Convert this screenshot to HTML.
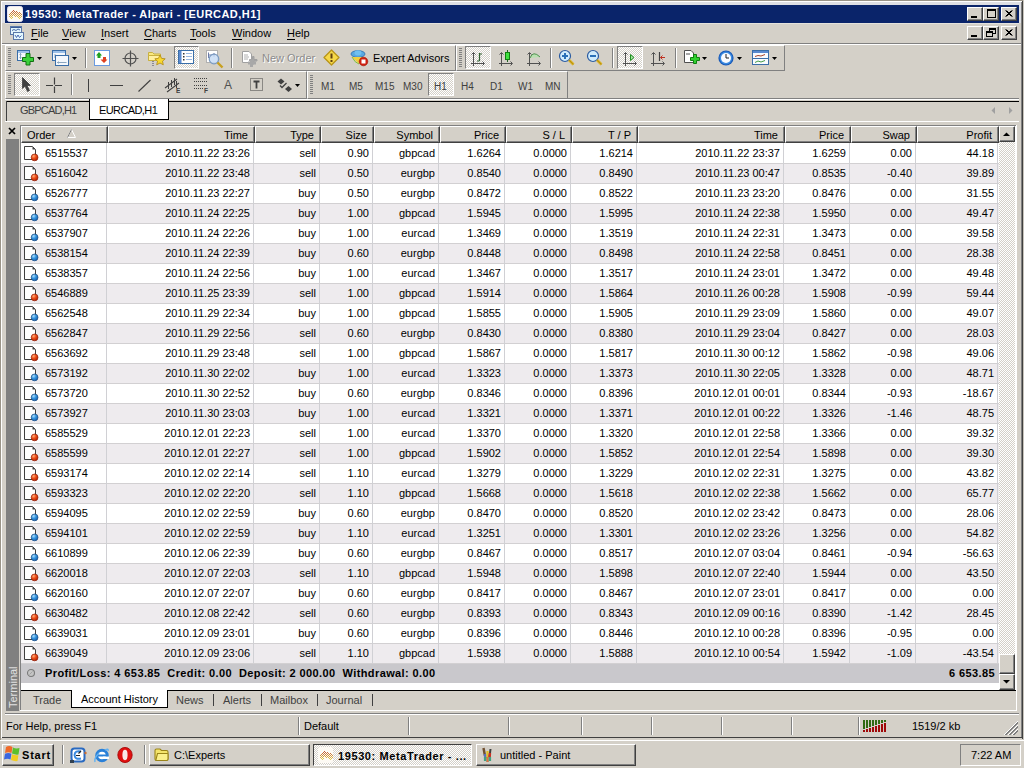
<!DOCTYPE html>
<html><head><meta charset="utf-8"><title>MetaTrader</title><style>
*{box-sizing:border-box}
html,body{margin:0;padding:0}
body{width:1024px;height:768px;overflow:hidden;position:relative;background:#D4D0C8;font-family:"Liberation Sans",sans-serif;font-size:11px;color:#000}
.a{position:absolute}
.t{position:absolute;white-space:pre;line-height:13px}
.btn{position:absolute;background:#D4D0C8;border-top:1px solid #fff;border-left:1px solid #fff;border-right:1px solid #404040;border-bottom:1px solid #404040;box-shadow:inset -1px -1px 0 #808080}
.sunk{position:absolute;border-top:1px solid #808080;border-left:1px solid #808080;border-right:1px solid #fff;border-bottom:1px solid #fff}
.pressed{position:absolute;border-top:1px solid #808080;border-left:1px solid #808080;border-right:1px solid #fff;border-bottom:1px solid #fff;background:repeating-conic-gradient(#fff 0 25%,#D4D0C8 0 50%) 0 0/2px 2px}
.dith{background:repeating-conic-gradient(#fff 0 25%,#D4D0C8 0 50%) 0 0/2px 2px}
.hl{position:absolute;height:1px}
.vl{position:absolute;width:1px}
.row{position:absolute;left:21px;width:978px;height:20px}
.c{position:absolute;top:0;height:19px;line-height:19px;text-align:right;white-space:pre}
.hd{position:absolute;top:0;height:17px;line-height:16px;white-space:pre;text-align:right}
</style></head><body>
<svg width="0" height="0" style="position:absolute"><defs><radialGradient id="gs" cx="0.35" cy="0.3" r="0.75"><stop offset="0" stop-color="#ffb080"/><stop offset="0.45" stop-color="#f05018"/><stop offset="1" stop-color="#b02008"/></radialGradient><radialGradient id="gb" cx="0.35" cy="0.3" r="0.75"><stop offset="0" stop-color="#b0e0ff"/><stop offset="0.45" stop-color="#3898e0"/><stop offset="1" stop-color="#1860b0"/></radialGradient></defs></svg><div class="a" style="left:0;top:0;width:1024px;height:1px;background:#9a9488"></div><div class="a" style="left:0;top:0;width:1px;height:740px;background:#9a9488"></div><div class="a" style="left:1px;top:1px;width:1021px;height:1px;background:#fff"></div><div class="a" style="left:1px;top:1px;width:1px;height:737px;background:#fff"></div><div class="a" style="left:1022px;top:1px;width:1px;height:738px;background:#404040"></div><div class="a" style="left:1021px;top:2px;width:1px;height:736px;background:#808080"></div><div class="a" style="left:1023px;top:0;width:1px;height:740px;background:#c8c4bc"></div><div class="a" style="left:2px;top:2px;width:1019px;height:3px;background:#DEDFE4"></div><div class="a" style="left:2px;top:2px;width:3px;height:21px;background:#DEDFE4"></div><div class="a" style="left:1019px;top:2px;width:2px;height:21px;background:#DEDFE4"></div><div class="a" style="left:5px;top:5px;width:1014px;height:18px;background:#0A246A"></div><div class="t" style="left:25px;top:8px;font-weight:bold;color:#fff;letter-spacing:0.45px">19530: MetaTrader - Alpari - [EURCAD,H1]</div><div class="btn" style="left:967px;top:7px;width:16px;height:14px"></div><div class="btn" style="left:983px;top:7px;width:16px;height:14px"></div><div class="btn" style="left:1001px;top:7px;width:16px;height:14px"></div><div class="a" style="left:971px;top:16px;width:6px;height:2px;background:#000"></div><div class="a" style="left:987px;top:9px;width:9px;height:9px;border:1px solid #000;border-top-width:2px"></div><svg class="a" style="left:1001px;top:7px" width="16" height="14"><path d="M4.5 3.5 L10.5 9.5 M5.5 3.5 L11.5 9.5 M10.5 3.5 L4.5 9.5 M11.5 3.5 L5.5 9.5" stroke="#000" stroke-width="1"/></svg><div class="t" style="left:31px;top:27px"><u style="text-decoration:none;border-bottom:1px solid #000">F</u>ile</div><div class="t" style="left:62px;top:27px"><u style="text-decoration:none;border-bottom:1px solid #000">V</u>iew</div><div class="t" style="left:101px;top:27px"><u style="text-decoration:none;border-bottom:1px solid #000">I</u>nsert</div><div class="t" style="left:144px;top:27px"><u style="text-decoration:none;border-bottom:1px solid #000">C</u>harts</div><div class="t" style="left:190px;top:27px"><u style="text-decoration:none;border-bottom:1px solid #000">T</u>ools</div><div class="t" style="left:232px;top:27px"><u style="text-decoration:none;border-bottom:1px solid #000">W</u>indow</div><div class="t" style="left:287px;top:27px"><u style="text-decoration:none;border-bottom:1px solid #000">H</u>elp</div><div class="btn" style="left:967px;top:26px;width:16px;height:14px"></div><div class="btn" style="left:983px;top:26px;width:16px;height:14px"></div><div class="btn" style="left:1001px;top:26px;width:16px;height:14px"></div><div class="a" style="left:971px;top:35px;width:6px;height:2px;background:#000"></div><div class="a" style="left:989px;top:28px;width:7px;height:6px;border:1px solid #000;border-top-width:2px"></div><div class="a" style="left:986px;top:31px;width:7px;height:6px;border:1px solid #000;border-top-width:2px;background:#D4D0C8"></div><svg class="a" style="left:1001px;top:26px" width="16" height="14"><path d="M4.5 3.5 L10.5 9.5 M5.5 3.5 L11.5 9.5 M10.5 3.5 L4.5 9.5 M11.5 3.5 L5.5 9.5" stroke="#000" stroke-width="1"/></svg><div class="hl" style="left:5px;top:23px;width:1014px;background:#E4E2DC"></div><div class="hl" style="left:2px;top:43px;width:1019px;background:#808080"></div><div class="hl" style="left:2px;top:44px;width:1019px;background:#fff"></div><div class="a" style="left:5px;top:45px;width:451px;height:26px;border-left:1px solid #fff;border-top:1px solid #fff;border-right:1px solid #808080;border-bottom:1px solid #808080"></div><div class="a" style="left:456px;top:45px;width:329px;height:26px;border-left:1px solid #fff;border-top:1px solid #fff;border-right:1px solid #808080;border-bottom:1px solid #808080"></div><div class="a" style="left:5px;top:71px;width:302px;height:28px;border-left:1px solid #fff;border-top:1px solid #fff;border-right:1px solid #808080;border-bottom:1px solid #808080"></div><div class="a" style="left:307px;top:71px;width:261px;height:28px;border-left:1px solid #fff;border-top:1px solid #fff;border-right:1px solid #808080;border-bottom:1px solid #808080"></div><div class="a" style="left:8px;top:48px;width:3px;height:19px;background:repeating-linear-gradient(#808080 0 1px,transparent 1px 2px)"></div><div class="a" style="left:459px;top:48px;width:3px;height:19px;background:repeating-linear-gradient(#808080 0 1px,transparent 1px 2px)"></div><div class="a" style="left:8px;top:75px;width:3px;height:19px;background:repeating-linear-gradient(#808080 0 1px,transparent 1px 2px)"></div><div class="a" style="left:310px;top:75px;width:3px;height:19px;background:repeating-linear-gradient(#808080 0 1px,transparent 1px 2px)"></div><div class="hl" style="left:568px;top:98px;width:451px;background:#808080"></div><div class="hl" style="left:5px;top:99px;width:1014px;height:1px;background:#fff"></div><div class="hl" style="left:6px;top:101px;width:1013px;background:#000"></div><div class="a" style="left:6px;top:101px;width:1px;height:20px;background:#404040"></div><div class="t" style="left:20px;top:104px;color:#404040;letter-spacing:-0.8px">GBPCAD,H1</div><div class="a" style="left:89px;top:99px;width:80px;height:21px;background:#fff;border-left:1px solid #000;border-right:1px solid #000;border-bottom:1px solid #000"></div><div class="t" style="left:99px;top:104px;letter-spacing:-0.6px">EURCAD,H1</div><div class="hl" style="left:5px;top:121px;width:1014px;background:#fff"></div><svg class="a" style="left:8px;top:127px" width="8" height="8"><path d="M1 1L7 7M7 1L1 7" stroke="#000" stroke-width="1.7"/></svg><div class="a" style="left:6px;top:139px;width:13px;height:572px;background:#808080"></div><div class="t" style="left:7px;top:708px;transform:rotate(-90deg);transform-origin:0 0;color:#E2E2E2;font-size:11px">Terminal</div><div class="a" style="left:20px;top:125px;width:996px;height:566px;background:#fff;border-left:1px solid #808080;border-top:1px solid #808080"></div><div class="a" style="left:21px;top:126px;width:87px;height:17px;background:#D4D0C8;border-top:1px solid #fff;border-left:1px solid #fff;border-right:1px solid #404040;border-bottom:1px solid #404040;box-shadow:inset -1px -1px 0 #808080"></div><div class="t" style="left:27px;top:129px">Order</div><svg class="a" style="left:67px;top:129px" width="10" height="9"><path d="M4.5 0.5 L0.5 8.5 L8.5 8.5 Z" fill="none" stroke="#fff"/><path d="M4.5 0.5 L0.5 8.5" stroke="#808080"/></svg><div class="a" style="left:108px;top:126px;width:147px;height:17px;background:#D4D0C8;border-top:1px solid #fff;border-left:1px solid #fff;border-right:1px solid #404040;border-bottom:1px solid #404040;box-shadow:inset -1px -1px 0 #808080"></div><div class="t" style="left:108px;top:129px;width:140px;text-align:right">Time</div><div class="a" style="left:255px;top:126px;width:66px;height:17px;background:#D4D0C8;border-top:1px solid #fff;border-left:1px solid #fff;border-right:1px solid #404040;border-bottom:1px solid #404040;box-shadow:inset -1px -1px 0 #808080"></div><div class="t" style="left:255px;top:129px;width:59px;text-align:right">Type</div><div class="a" style="left:321px;top:126px;width:53px;height:17px;background:#D4D0C8;border-top:1px solid #fff;border-left:1px solid #fff;border-right:1px solid #404040;border-bottom:1px solid #404040;box-shadow:inset -1px -1px 0 #808080"></div><div class="t" style="left:321px;top:129px;width:46px;text-align:right">Size</div><div class="a" style="left:374px;top:126px;width:66px;height:17px;background:#D4D0C8;border-top:1px solid #fff;border-left:1px solid #fff;border-right:1px solid #404040;border-bottom:1px solid #404040;box-shadow:inset -1px -1px 0 #808080"></div><div class="t" style="left:374px;top:129px;width:59px;text-align:right">Symbol</div><div class="a" style="left:440px;top:126px;width:66px;height:17px;background:#D4D0C8;border-top:1px solid #fff;border-left:1px solid #fff;border-right:1px solid #404040;border-bottom:1px solid #404040;box-shadow:inset -1px -1px 0 #808080"></div><div class="t" style="left:440px;top:129px;width:59px;text-align:right">Price</div><div class="a" style="left:506px;top:126px;width:66px;height:17px;background:#D4D0C8;border-top:1px solid #fff;border-left:1px solid #fff;border-right:1px solid #404040;border-bottom:1px solid #404040;box-shadow:inset -1px -1px 0 #808080"></div><div class="t" style="left:506px;top:129px;width:59px;text-align:right">S / L</div><div class="a" style="left:572px;top:126px;width:66px;height:17px;background:#D4D0C8;border-top:1px solid #fff;border-left:1px solid #fff;border-right:1px solid #404040;border-bottom:1px solid #404040;box-shadow:inset -1px -1px 0 #808080"></div><div class="t" style="left:572px;top:129px;width:59px;text-align:right">T / P</div><div class="a" style="left:638px;top:126px;width:147px;height:17px;background:#D4D0C8;border-top:1px solid #fff;border-left:1px solid #fff;border-right:1px solid #404040;border-bottom:1px solid #404040;box-shadow:inset -1px -1px 0 #808080"></div><div class="t" style="left:638px;top:129px;width:140px;text-align:right">Time</div><div class="a" style="left:785px;top:126px;width:66px;height:17px;background:#D4D0C8;border-top:1px solid #fff;border-left:1px solid #fff;border-right:1px solid #404040;border-bottom:1px solid #404040;box-shadow:inset -1px -1px 0 #808080"></div><div class="t" style="left:785px;top:129px;width:59px;text-align:right">Price</div><div class="a" style="left:851px;top:126px;width:66px;height:17px;background:#D4D0C8;border-top:1px solid #fff;border-left:1px solid #fff;border-right:1px solid #404040;border-bottom:1px solid #404040;box-shadow:inset -1px -1px 0 #808080"></div><div class="t" style="left:851px;top:129px;width:59px;text-align:right">Swap</div><div class="a" style="left:917px;top:126px;width:82px;height:17px;background:#D4D0C8;border-top:1px solid #fff;border-left:1px solid #fff;border-right:1px solid #404040;border-bottom:1px solid #404040;box-shadow:inset -1px -1px 0 #808080"></div><div class="t" style="left:917px;top:129px;width:75px;text-align:right">Profit</div><div class="a" style="left:21px;top:144px;width:978px;height:19px;background:#fff"></div><div class="hl" style="left:21px;top:163px;width:978px;background:#D2D0D2"></div><svg class="a" style="left:23px;top:145px" width="16" height="17"><path d="M1.5 1.5H9.5L12.5 4.5V14.5H1.5Z" fill="#fff" stroke="#404040"/><path d="M9.5 1.5V4.5H12.5Z" fill="#404040"/><circle cx="11.6" cy="12.4" r="3.4" fill="url(#gs)" stroke="#902008" stroke-width="0.7"/></svg><div class="t" style="left:45px;top:147px">6515537</div><div class="t" style="left:107px;top:147px;width:143px;text-align:right">2010.11.22 23:26</div><div class="t" style="left:254px;top:147px;width:62px;text-align:right">sell</div><div class="t" style="left:320px;top:147px;width:49px;text-align:right">0.90</div><div class="t" style="left:373px;top:147px;width:62px;text-align:right">gbpcad</div><div class="t" style="left:439px;top:147px;width:62px;text-align:right">1.6264</div><div class="t" style="left:505px;top:147px;width:62px;text-align:right">0.0000</div><div class="t" style="left:571px;top:147px;width:62px;text-align:right">1.6214</div><div class="t" style="left:637px;top:147px;width:143px;text-align:right">2010.11.22 23:37</div><div class="t" style="left:784px;top:147px;width:62px;text-align:right">1.6259</div><div class="t" style="left:850px;top:147px;width:62px;text-align:right">0.00</div><div class="t" style="left:916px;top:147px;width:78px;text-align:right">44.18</div><div class="a" style="left:21px;top:164px;width:978px;height:19px;background:#EEEBEE"></div><div class="hl" style="left:21px;top:183px;width:978px;background:#D2D0D2"></div><svg class="a" style="left:23px;top:165px" width="16" height="17"><path d="M1.5 1.5H9.5L12.5 4.5V14.5H1.5Z" fill="#fff" stroke="#404040"/><path d="M9.5 1.5V4.5H12.5Z" fill="#404040"/><circle cx="11.6" cy="12.4" r="3.4" fill="url(#gs)" stroke="#902008" stroke-width="0.7"/></svg><div class="t" style="left:45px;top:167px">6516042</div><div class="t" style="left:107px;top:167px;width:143px;text-align:right">2010.11.22 23:48</div><div class="t" style="left:254px;top:167px;width:62px;text-align:right">sell</div><div class="t" style="left:320px;top:167px;width:49px;text-align:right">0.50</div><div class="t" style="left:373px;top:167px;width:62px;text-align:right">eurgbp</div><div class="t" style="left:439px;top:167px;width:62px;text-align:right">0.8540</div><div class="t" style="left:505px;top:167px;width:62px;text-align:right">0.0000</div><div class="t" style="left:571px;top:167px;width:62px;text-align:right">0.8490</div><div class="t" style="left:637px;top:167px;width:143px;text-align:right">2010.11.23 00:47</div><div class="t" style="left:784px;top:167px;width:62px;text-align:right">0.8535</div><div class="t" style="left:850px;top:167px;width:62px;text-align:right">-0.40</div><div class="t" style="left:916px;top:167px;width:78px;text-align:right">39.89</div><div class="a" style="left:21px;top:184px;width:978px;height:19px;background:#fff"></div><div class="hl" style="left:21px;top:203px;width:978px;background:#D2D0D2"></div><svg class="a" style="left:23px;top:185px" width="16" height="17"><path d="M1.5 1.5H9.5L12.5 4.5V14.5H1.5Z" fill="#fff" stroke="#404040"/><path d="M9.5 1.5V4.5H12.5Z" fill="#404040"/><circle cx="11.6" cy="12.4" r="3.4" fill="url(#gb)" stroke="#1a4a80" stroke-width="0.7"/></svg><div class="t" style="left:45px;top:187px">6526777</div><div class="t" style="left:107px;top:187px;width:143px;text-align:right">2010.11.23 22:27</div><div class="t" style="left:254px;top:187px;width:62px;text-align:right">buy</div><div class="t" style="left:320px;top:187px;width:49px;text-align:right">0.50</div><div class="t" style="left:373px;top:187px;width:62px;text-align:right">eurgbp</div><div class="t" style="left:439px;top:187px;width:62px;text-align:right">0.8472</div><div class="t" style="left:505px;top:187px;width:62px;text-align:right">0.0000</div><div class="t" style="left:571px;top:187px;width:62px;text-align:right">0.8522</div><div class="t" style="left:637px;top:187px;width:143px;text-align:right">2010.11.23 23:20</div><div class="t" style="left:784px;top:187px;width:62px;text-align:right">0.8476</div><div class="t" style="left:850px;top:187px;width:62px;text-align:right">0.00</div><div class="t" style="left:916px;top:187px;width:78px;text-align:right">31.55</div><div class="a" style="left:21px;top:204px;width:978px;height:19px;background:#EEEBEE"></div><div class="hl" style="left:21px;top:223px;width:978px;background:#D2D0D2"></div><svg class="a" style="left:23px;top:205px" width="16" height="17"><path d="M1.5 1.5H9.5L12.5 4.5V14.5H1.5Z" fill="#fff" stroke="#404040"/><path d="M9.5 1.5V4.5H12.5Z" fill="#404040"/><circle cx="11.6" cy="12.4" r="3.4" fill="url(#gb)" stroke="#1a4a80" stroke-width="0.7"/></svg><div class="t" style="left:45px;top:207px">6537764</div><div class="t" style="left:107px;top:207px;width:143px;text-align:right">2010.11.24 22:25</div><div class="t" style="left:254px;top:207px;width:62px;text-align:right">buy</div><div class="t" style="left:320px;top:207px;width:49px;text-align:right">1.00</div><div class="t" style="left:373px;top:207px;width:62px;text-align:right">gbpcad</div><div class="t" style="left:439px;top:207px;width:62px;text-align:right">1.5945</div><div class="t" style="left:505px;top:207px;width:62px;text-align:right">0.0000</div><div class="t" style="left:571px;top:207px;width:62px;text-align:right">1.5995</div><div class="t" style="left:637px;top:207px;width:143px;text-align:right">2010.11.24 22:38</div><div class="t" style="left:784px;top:207px;width:62px;text-align:right">1.5950</div><div class="t" style="left:850px;top:207px;width:62px;text-align:right">0.00</div><div class="t" style="left:916px;top:207px;width:78px;text-align:right">49.47</div><div class="a" style="left:21px;top:224px;width:978px;height:19px;background:#fff"></div><div class="hl" style="left:21px;top:243px;width:978px;background:#D2D0D2"></div><svg class="a" style="left:23px;top:225px" width="16" height="17"><path d="M1.5 1.5H9.5L12.5 4.5V14.5H1.5Z" fill="#fff" stroke="#404040"/><path d="M9.5 1.5V4.5H12.5Z" fill="#404040"/><circle cx="11.6" cy="12.4" r="3.4" fill="url(#gb)" stroke="#1a4a80" stroke-width="0.7"/></svg><div class="t" style="left:45px;top:227px">6537907</div><div class="t" style="left:107px;top:227px;width:143px;text-align:right">2010.11.24 22:26</div><div class="t" style="left:254px;top:227px;width:62px;text-align:right">buy</div><div class="t" style="left:320px;top:227px;width:49px;text-align:right">1.00</div><div class="t" style="left:373px;top:227px;width:62px;text-align:right">eurcad</div><div class="t" style="left:439px;top:227px;width:62px;text-align:right">1.3469</div><div class="t" style="left:505px;top:227px;width:62px;text-align:right">0.0000</div><div class="t" style="left:571px;top:227px;width:62px;text-align:right">1.3519</div><div class="t" style="left:637px;top:227px;width:143px;text-align:right">2010.11.24 22:31</div><div class="t" style="left:784px;top:227px;width:62px;text-align:right">1.3473</div><div class="t" style="left:850px;top:227px;width:62px;text-align:right">0.00</div><div class="t" style="left:916px;top:227px;width:78px;text-align:right">39.58</div><div class="a" style="left:21px;top:244px;width:978px;height:19px;background:#EEEBEE"></div><div class="hl" style="left:21px;top:263px;width:978px;background:#D2D0D2"></div><svg class="a" style="left:23px;top:245px" width="16" height="17"><path d="M1.5 1.5H9.5L12.5 4.5V14.5H1.5Z" fill="#fff" stroke="#404040"/><path d="M9.5 1.5V4.5H12.5Z" fill="#404040"/><circle cx="11.6" cy="12.4" r="3.4" fill="url(#gb)" stroke="#1a4a80" stroke-width="0.7"/></svg><div class="t" style="left:45px;top:247px">6538154</div><div class="t" style="left:107px;top:247px;width:143px;text-align:right">2010.11.24 22:39</div><div class="t" style="left:254px;top:247px;width:62px;text-align:right">buy</div><div class="t" style="left:320px;top:247px;width:49px;text-align:right">0.60</div><div class="t" style="left:373px;top:247px;width:62px;text-align:right">eurgbp</div><div class="t" style="left:439px;top:247px;width:62px;text-align:right">0.8448</div><div class="t" style="left:505px;top:247px;width:62px;text-align:right">0.0000</div><div class="t" style="left:571px;top:247px;width:62px;text-align:right">0.8498</div><div class="t" style="left:637px;top:247px;width:143px;text-align:right">2010.11.24 22:58</div><div class="t" style="left:784px;top:247px;width:62px;text-align:right">0.8451</div><div class="t" style="left:850px;top:247px;width:62px;text-align:right">0.00</div><div class="t" style="left:916px;top:247px;width:78px;text-align:right">28.38</div><div class="a" style="left:21px;top:264px;width:978px;height:19px;background:#fff"></div><div class="hl" style="left:21px;top:283px;width:978px;background:#D2D0D2"></div><svg class="a" style="left:23px;top:265px" width="16" height="17"><path d="M1.5 1.5H9.5L12.5 4.5V14.5H1.5Z" fill="#fff" stroke="#404040"/><path d="M9.5 1.5V4.5H12.5Z" fill="#404040"/><circle cx="11.6" cy="12.4" r="3.4" fill="url(#gb)" stroke="#1a4a80" stroke-width="0.7"/></svg><div class="t" style="left:45px;top:267px">6538357</div><div class="t" style="left:107px;top:267px;width:143px;text-align:right">2010.11.24 22:56</div><div class="t" style="left:254px;top:267px;width:62px;text-align:right">buy</div><div class="t" style="left:320px;top:267px;width:49px;text-align:right">1.00</div><div class="t" style="left:373px;top:267px;width:62px;text-align:right">eurcad</div><div class="t" style="left:439px;top:267px;width:62px;text-align:right">1.3467</div><div class="t" style="left:505px;top:267px;width:62px;text-align:right">0.0000</div><div class="t" style="left:571px;top:267px;width:62px;text-align:right">1.3517</div><div class="t" style="left:637px;top:267px;width:143px;text-align:right">2010.11.24 23:01</div><div class="t" style="left:784px;top:267px;width:62px;text-align:right">1.3472</div><div class="t" style="left:850px;top:267px;width:62px;text-align:right">0.00</div><div class="t" style="left:916px;top:267px;width:78px;text-align:right">49.48</div><div class="a" style="left:21px;top:284px;width:978px;height:19px;background:#EEEBEE"></div><div class="hl" style="left:21px;top:303px;width:978px;background:#D2D0D2"></div><svg class="a" style="left:23px;top:285px" width="16" height="17"><path d="M1.5 1.5H9.5L12.5 4.5V14.5H1.5Z" fill="#fff" stroke="#404040"/><path d="M9.5 1.5V4.5H12.5Z" fill="#404040"/><circle cx="11.6" cy="12.4" r="3.4" fill="url(#gs)" stroke="#902008" stroke-width="0.7"/></svg><div class="t" style="left:45px;top:287px">6546889</div><div class="t" style="left:107px;top:287px;width:143px;text-align:right">2010.11.25 23:39</div><div class="t" style="left:254px;top:287px;width:62px;text-align:right">sell</div><div class="t" style="left:320px;top:287px;width:49px;text-align:right">1.00</div><div class="t" style="left:373px;top:287px;width:62px;text-align:right">gbpcad</div><div class="t" style="left:439px;top:287px;width:62px;text-align:right">1.5914</div><div class="t" style="left:505px;top:287px;width:62px;text-align:right">0.0000</div><div class="t" style="left:571px;top:287px;width:62px;text-align:right">1.5864</div><div class="t" style="left:637px;top:287px;width:143px;text-align:right">2010.11.26 00:28</div><div class="t" style="left:784px;top:287px;width:62px;text-align:right">1.5908</div><div class="t" style="left:850px;top:287px;width:62px;text-align:right">-0.99</div><div class="t" style="left:916px;top:287px;width:78px;text-align:right">59.44</div><div class="a" style="left:21px;top:304px;width:978px;height:19px;background:#fff"></div><div class="hl" style="left:21px;top:323px;width:978px;background:#D2D0D2"></div><svg class="a" style="left:23px;top:305px" width="16" height="17"><path d="M1.5 1.5H9.5L12.5 4.5V14.5H1.5Z" fill="#fff" stroke="#404040"/><path d="M9.5 1.5V4.5H12.5Z" fill="#404040"/><circle cx="11.6" cy="12.4" r="3.4" fill="url(#gb)" stroke="#1a4a80" stroke-width="0.7"/></svg><div class="t" style="left:45px;top:307px">6562548</div><div class="t" style="left:107px;top:307px;width:143px;text-align:right">2010.11.29 22:34</div><div class="t" style="left:254px;top:307px;width:62px;text-align:right">buy</div><div class="t" style="left:320px;top:307px;width:49px;text-align:right">1.00</div><div class="t" style="left:373px;top:307px;width:62px;text-align:right">gbpcad</div><div class="t" style="left:439px;top:307px;width:62px;text-align:right">1.5855</div><div class="t" style="left:505px;top:307px;width:62px;text-align:right">0.0000</div><div class="t" style="left:571px;top:307px;width:62px;text-align:right">1.5905</div><div class="t" style="left:637px;top:307px;width:143px;text-align:right">2010.11.29 23:09</div><div class="t" style="left:784px;top:307px;width:62px;text-align:right">1.5860</div><div class="t" style="left:850px;top:307px;width:62px;text-align:right">0.00</div><div class="t" style="left:916px;top:307px;width:78px;text-align:right">49.07</div><div class="a" style="left:21px;top:324px;width:978px;height:19px;background:#EEEBEE"></div><div class="hl" style="left:21px;top:343px;width:978px;background:#D2D0D2"></div><svg class="a" style="left:23px;top:325px" width="16" height="17"><path d="M1.5 1.5H9.5L12.5 4.5V14.5H1.5Z" fill="#fff" stroke="#404040"/><path d="M9.5 1.5V4.5H12.5Z" fill="#404040"/><circle cx="11.6" cy="12.4" r="3.4" fill="url(#gs)" stroke="#902008" stroke-width="0.7"/></svg><div class="t" style="left:45px;top:327px">6562847</div><div class="t" style="left:107px;top:327px;width:143px;text-align:right">2010.11.29 22:56</div><div class="t" style="left:254px;top:327px;width:62px;text-align:right">sell</div><div class="t" style="left:320px;top:327px;width:49px;text-align:right">0.60</div><div class="t" style="left:373px;top:327px;width:62px;text-align:right">eurgbp</div><div class="t" style="left:439px;top:327px;width:62px;text-align:right">0.8430</div><div class="t" style="left:505px;top:327px;width:62px;text-align:right">0.0000</div><div class="t" style="left:571px;top:327px;width:62px;text-align:right">0.8380</div><div class="t" style="left:637px;top:327px;width:143px;text-align:right">2010.11.29 23:04</div><div class="t" style="left:784px;top:327px;width:62px;text-align:right">0.8427</div><div class="t" style="left:850px;top:327px;width:62px;text-align:right">0.00</div><div class="t" style="left:916px;top:327px;width:78px;text-align:right">28.03</div><div class="a" style="left:21px;top:344px;width:978px;height:19px;background:#fff"></div><div class="hl" style="left:21px;top:363px;width:978px;background:#D2D0D2"></div><svg class="a" style="left:23px;top:345px" width="16" height="17"><path d="M1.5 1.5H9.5L12.5 4.5V14.5H1.5Z" fill="#fff" stroke="#404040"/><path d="M9.5 1.5V4.5H12.5Z" fill="#404040"/><circle cx="11.6" cy="12.4" r="3.4" fill="url(#gs)" stroke="#902008" stroke-width="0.7"/></svg><div class="t" style="left:45px;top:347px">6563692</div><div class="t" style="left:107px;top:347px;width:143px;text-align:right">2010.11.29 23:48</div><div class="t" style="left:254px;top:347px;width:62px;text-align:right">sell</div><div class="t" style="left:320px;top:347px;width:49px;text-align:right">1.00</div><div class="t" style="left:373px;top:347px;width:62px;text-align:right">gbpcad</div><div class="t" style="left:439px;top:347px;width:62px;text-align:right">1.5867</div><div class="t" style="left:505px;top:347px;width:62px;text-align:right">0.0000</div><div class="t" style="left:571px;top:347px;width:62px;text-align:right">1.5817</div><div class="t" style="left:637px;top:347px;width:143px;text-align:right">2010.11.30 00:12</div><div class="t" style="left:784px;top:347px;width:62px;text-align:right">1.5862</div><div class="t" style="left:850px;top:347px;width:62px;text-align:right">-0.98</div><div class="t" style="left:916px;top:347px;width:78px;text-align:right">49.06</div><div class="a" style="left:21px;top:364px;width:978px;height:19px;background:#EEEBEE"></div><div class="hl" style="left:21px;top:383px;width:978px;background:#D2D0D2"></div><svg class="a" style="left:23px;top:365px" width="16" height="17"><path d="M1.5 1.5H9.5L12.5 4.5V14.5H1.5Z" fill="#fff" stroke="#404040"/><path d="M9.5 1.5V4.5H12.5Z" fill="#404040"/><circle cx="11.6" cy="12.4" r="3.4" fill="url(#gb)" stroke="#1a4a80" stroke-width="0.7"/></svg><div class="t" style="left:45px;top:367px">6573192</div><div class="t" style="left:107px;top:367px;width:143px;text-align:right">2010.11.30 22:02</div><div class="t" style="left:254px;top:367px;width:62px;text-align:right">buy</div><div class="t" style="left:320px;top:367px;width:49px;text-align:right">1.00</div><div class="t" style="left:373px;top:367px;width:62px;text-align:right">eurcad</div><div class="t" style="left:439px;top:367px;width:62px;text-align:right">1.3323</div><div class="t" style="left:505px;top:367px;width:62px;text-align:right">0.0000</div><div class="t" style="left:571px;top:367px;width:62px;text-align:right">1.3373</div><div class="t" style="left:637px;top:367px;width:143px;text-align:right">2010.11.30 22:05</div><div class="t" style="left:784px;top:367px;width:62px;text-align:right">1.3328</div><div class="t" style="left:850px;top:367px;width:62px;text-align:right">0.00</div><div class="t" style="left:916px;top:367px;width:78px;text-align:right">48.71</div><div class="a" style="left:21px;top:384px;width:978px;height:19px;background:#fff"></div><div class="hl" style="left:21px;top:403px;width:978px;background:#D2D0D2"></div><svg class="a" style="left:23px;top:385px" width="16" height="17"><path d="M1.5 1.5H9.5L12.5 4.5V14.5H1.5Z" fill="#fff" stroke="#404040"/><path d="M9.5 1.5V4.5H12.5Z" fill="#404040"/><circle cx="11.6" cy="12.4" r="3.4" fill="url(#gb)" stroke="#1a4a80" stroke-width="0.7"/></svg><div class="t" style="left:45px;top:387px">6573720</div><div class="t" style="left:107px;top:387px;width:143px;text-align:right">2010.11.30 22:52</div><div class="t" style="left:254px;top:387px;width:62px;text-align:right">buy</div><div class="t" style="left:320px;top:387px;width:49px;text-align:right">0.60</div><div class="t" style="left:373px;top:387px;width:62px;text-align:right">eurgbp</div><div class="t" style="left:439px;top:387px;width:62px;text-align:right">0.8346</div><div class="t" style="left:505px;top:387px;width:62px;text-align:right">0.0000</div><div class="t" style="left:571px;top:387px;width:62px;text-align:right">0.8396</div><div class="t" style="left:637px;top:387px;width:143px;text-align:right">2010.12.01 00:01</div><div class="t" style="left:784px;top:387px;width:62px;text-align:right">0.8344</div><div class="t" style="left:850px;top:387px;width:62px;text-align:right">-0.93</div><div class="t" style="left:916px;top:387px;width:78px;text-align:right">-18.67</div><div class="a" style="left:21px;top:404px;width:978px;height:19px;background:#EEEBEE"></div><div class="hl" style="left:21px;top:423px;width:978px;background:#D2D0D2"></div><svg class="a" style="left:23px;top:405px" width="16" height="17"><path d="M1.5 1.5H9.5L12.5 4.5V14.5H1.5Z" fill="#fff" stroke="#404040"/><path d="M9.5 1.5V4.5H12.5Z" fill="#404040"/><circle cx="11.6" cy="12.4" r="3.4" fill="url(#gb)" stroke="#1a4a80" stroke-width="0.7"/></svg><div class="t" style="left:45px;top:407px">6573927</div><div class="t" style="left:107px;top:407px;width:143px;text-align:right">2010.11.30 23:03</div><div class="t" style="left:254px;top:407px;width:62px;text-align:right">buy</div><div class="t" style="left:320px;top:407px;width:49px;text-align:right">1.00</div><div class="t" style="left:373px;top:407px;width:62px;text-align:right">eurcad</div><div class="t" style="left:439px;top:407px;width:62px;text-align:right">1.3321</div><div class="t" style="left:505px;top:407px;width:62px;text-align:right">0.0000</div><div class="t" style="left:571px;top:407px;width:62px;text-align:right">1.3371</div><div class="t" style="left:637px;top:407px;width:143px;text-align:right">2010.12.01 00:22</div><div class="t" style="left:784px;top:407px;width:62px;text-align:right">1.3326</div><div class="t" style="left:850px;top:407px;width:62px;text-align:right">-1.46</div><div class="t" style="left:916px;top:407px;width:78px;text-align:right">48.75</div><div class="a" style="left:21px;top:424px;width:978px;height:19px;background:#fff"></div><div class="hl" style="left:21px;top:443px;width:978px;background:#D2D0D2"></div><svg class="a" style="left:23px;top:425px" width="16" height="17"><path d="M1.5 1.5H9.5L12.5 4.5V14.5H1.5Z" fill="#fff" stroke="#404040"/><path d="M9.5 1.5V4.5H12.5Z" fill="#404040"/><circle cx="11.6" cy="12.4" r="3.4" fill="url(#gs)" stroke="#902008" stroke-width="0.7"/></svg><div class="t" style="left:45px;top:427px">6585529</div><div class="t" style="left:107px;top:427px;width:143px;text-align:right">2010.12.01 22:23</div><div class="t" style="left:254px;top:427px;width:62px;text-align:right">sell</div><div class="t" style="left:320px;top:427px;width:49px;text-align:right">1.00</div><div class="t" style="left:373px;top:427px;width:62px;text-align:right">eurcad</div><div class="t" style="left:439px;top:427px;width:62px;text-align:right">1.3370</div><div class="t" style="left:505px;top:427px;width:62px;text-align:right">0.0000</div><div class="t" style="left:571px;top:427px;width:62px;text-align:right">1.3320</div><div class="t" style="left:637px;top:427px;width:143px;text-align:right">2010.12.01 22:58</div><div class="t" style="left:784px;top:427px;width:62px;text-align:right">1.3366</div><div class="t" style="left:850px;top:427px;width:62px;text-align:right">0.00</div><div class="t" style="left:916px;top:427px;width:78px;text-align:right">39.32</div><div class="a" style="left:21px;top:444px;width:978px;height:19px;background:#EEEBEE"></div><div class="hl" style="left:21px;top:463px;width:978px;background:#D2D0D2"></div><svg class="a" style="left:23px;top:445px" width="16" height="17"><path d="M1.5 1.5H9.5L12.5 4.5V14.5H1.5Z" fill="#fff" stroke="#404040"/><path d="M9.5 1.5V4.5H12.5Z" fill="#404040"/><circle cx="11.6" cy="12.4" r="3.4" fill="url(#gs)" stroke="#902008" stroke-width="0.7"/></svg><div class="t" style="left:45px;top:447px">6585599</div><div class="t" style="left:107px;top:447px;width:143px;text-align:right">2010.12.01 22:27</div><div class="t" style="left:254px;top:447px;width:62px;text-align:right">sell</div><div class="t" style="left:320px;top:447px;width:49px;text-align:right">1.00</div><div class="t" style="left:373px;top:447px;width:62px;text-align:right">gbpcad</div><div class="t" style="left:439px;top:447px;width:62px;text-align:right">1.5902</div><div class="t" style="left:505px;top:447px;width:62px;text-align:right">0.0000</div><div class="t" style="left:571px;top:447px;width:62px;text-align:right">1.5852</div><div class="t" style="left:637px;top:447px;width:143px;text-align:right">2010.12.01 22:54</div><div class="t" style="left:784px;top:447px;width:62px;text-align:right">1.5898</div><div class="t" style="left:850px;top:447px;width:62px;text-align:right">0.00</div><div class="t" style="left:916px;top:447px;width:78px;text-align:right">39.30</div><div class="a" style="left:21px;top:464px;width:978px;height:19px;background:#fff"></div><div class="hl" style="left:21px;top:483px;width:978px;background:#D2D0D2"></div><svg class="a" style="left:23px;top:465px" width="16" height="17"><path d="M1.5 1.5H9.5L12.5 4.5V14.5H1.5Z" fill="#fff" stroke="#404040"/><path d="M9.5 1.5V4.5H12.5Z" fill="#404040"/><circle cx="11.6" cy="12.4" r="3.4" fill="url(#gs)" stroke="#902008" stroke-width="0.7"/></svg><div class="t" style="left:45px;top:467px">6593174</div><div class="t" style="left:107px;top:467px;width:143px;text-align:right">2010.12.02 22:14</div><div class="t" style="left:254px;top:467px;width:62px;text-align:right">sell</div><div class="t" style="left:320px;top:467px;width:49px;text-align:right">1.10</div><div class="t" style="left:373px;top:467px;width:62px;text-align:right">eurcad</div><div class="t" style="left:439px;top:467px;width:62px;text-align:right">1.3279</div><div class="t" style="left:505px;top:467px;width:62px;text-align:right">0.0000</div><div class="t" style="left:571px;top:467px;width:62px;text-align:right">1.3229</div><div class="t" style="left:637px;top:467px;width:143px;text-align:right">2010.12.02 22:31</div><div class="t" style="left:784px;top:467px;width:62px;text-align:right">1.3275</div><div class="t" style="left:850px;top:467px;width:62px;text-align:right">0.00</div><div class="t" style="left:916px;top:467px;width:78px;text-align:right">43.82</div><div class="a" style="left:21px;top:484px;width:978px;height:19px;background:#EEEBEE"></div><div class="hl" style="left:21px;top:503px;width:978px;background:#D2D0D2"></div><svg class="a" style="left:23px;top:485px" width="16" height="17"><path d="M1.5 1.5H9.5L12.5 4.5V14.5H1.5Z" fill="#fff" stroke="#404040"/><path d="M9.5 1.5V4.5H12.5Z" fill="#404040"/><circle cx="11.6" cy="12.4" r="3.4" fill="url(#gs)" stroke="#902008" stroke-width="0.7"/></svg><div class="t" style="left:45px;top:487px">6593323</div><div class="t" style="left:107px;top:487px;width:143px;text-align:right">2010.12.02 22:20</div><div class="t" style="left:254px;top:487px;width:62px;text-align:right">sell</div><div class="t" style="left:320px;top:487px;width:49px;text-align:right">1.10</div><div class="t" style="left:373px;top:487px;width:62px;text-align:right">gbpcad</div><div class="t" style="left:439px;top:487px;width:62px;text-align:right">1.5668</div><div class="t" style="left:505px;top:487px;width:62px;text-align:right">0.0000</div><div class="t" style="left:571px;top:487px;width:62px;text-align:right">1.5618</div><div class="t" style="left:637px;top:487px;width:143px;text-align:right">2010.12.02 22:38</div><div class="t" style="left:784px;top:487px;width:62px;text-align:right">1.5662</div><div class="t" style="left:850px;top:487px;width:62px;text-align:right">0.00</div><div class="t" style="left:916px;top:487px;width:78px;text-align:right">65.77</div><div class="a" style="left:21px;top:504px;width:978px;height:19px;background:#fff"></div><div class="hl" style="left:21px;top:523px;width:978px;background:#D2D0D2"></div><svg class="a" style="left:23px;top:505px" width="16" height="17"><path d="M1.5 1.5H9.5L12.5 4.5V14.5H1.5Z" fill="#fff" stroke="#404040"/><path d="M9.5 1.5V4.5H12.5Z" fill="#404040"/><circle cx="11.6" cy="12.4" r="3.4" fill="url(#gb)" stroke="#1a4a80" stroke-width="0.7"/></svg><div class="t" style="left:45px;top:507px">6594095</div><div class="t" style="left:107px;top:507px;width:143px;text-align:right">2010.12.02 22:59</div><div class="t" style="left:254px;top:507px;width:62px;text-align:right">buy</div><div class="t" style="left:320px;top:507px;width:49px;text-align:right">0.60</div><div class="t" style="left:373px;top:507px;width:62px;text-align:right">eurgbp</div><div class="t" style="left:439px;top:507px;width:62px;text-align:right">0.8470</div><div class="t" style="left:505px;top:507px;width:62px;text-align:right">0.0000</div><div class="t" style="left:571px;top:507px;width:62px;text-align:right">0.8520</div><div class="t" style="left:637px;top:507px;width:143px;text-align:right">2010.12.02 23:42</div><div class="t" style="left:784px;top:507px;width:62px;text-align:right">0.8473</div><div class="t" style="left:850px;top:507px;width:62px;text-align:right">0.00</div><div class="t" style="left:916px;top:507px;width:78px;text-align:right">28.06</div><div class="a" style="left:21px;top:524px;width:978px;height:19px;background:#EEEBEE"></div><div class="hl" style="left:21px;top:543px;width:978px;background:#D2D0D2"></div><svg class="a" style="left:23px;top:525px" width="16" height="17"><path d="M1.5 1.5H9.5L12.5 4.5V14.5H1.5Z" fill="#fff" stroke="#404040"/><path d="M9.5 1.5V4.5H12.5Z" fill="#404040"/><circle cx="11.6" cy="12.4" r="3.4" fill="url(#gb)" stroke="#1a4a80" stroke-width="0.7"/></svg><div class="t" style="left:45px;top:527px">6594101</div><div class="t" style="left:107px;top:527px;width:143px;text-align:right">2010.12.02 22:59</div><div class="t" style="left:254px;top:527px;width:62px;text-align:right">buy</div><div class="t" style="left:320px;top:527px;width:49px;text-align:right">1.10</div><div class="t" style="left:373px;top:527px;width:62px;text-align:right">eurcad</div><div class="t" style="left:439px;top:527px;width:62px;text-align:right">1.3251</div><div class="t" style="left:505px;top:527px;width:62px;text-align:right">0.0000</div><div class="t" style="left:571px;top:527px;width:62px;text-align:right">1.3301</div><div class="t" style="left:637px;top:527px;width:143px;text-align:right">2010.12.02 23:26</div><div class="t" style="left:784px;top:527px;width:62px;text-align:right">1.3256</div><div class="t" style="left:850px;top:527px;width:62px;text-align:right">0.00</div><div class="t" style="left:916px;top:527px;width:78px;text-align:right">54.82</div><div class="a" style="left:21px;top:544px;width:978px;height:19px;background:#fff"></div><div class="hl" style="left:21px;top:563px;width:978px;background:#D2D0D2"></div><svg class="a" style="left:23px;top:545px" width="16" height="17"><path d="M1.5 1.5H9.5L12.5 4.5V14.5H1.5Z" fill="#fff" stroke="#404040"/><path d="M9.5 1.5V4.5H12.5Z" fill="#404040"/><circle cx="11.6" cy="12.4" r="3.4" fill="url(#gb)" stroke="#1a4a80" stroke-width="0.7"/></svg><div class="t" style="left:45px;top:547px">6610899</div><div class="t" style="left:107px;top:547px;width:143px;text-align:right">2010.12.06 22:39</div><div class="t" style="left:254px;top:547px;width:62px;text-align:right">buy</div><div class="t" style="left:320px;top:547px;width:49px;text-align:right">0.60</div><div class="t" style="left:373px;top:547px;width:62px;text-align:right">eurgbp</div><div class="t" style="left:439px;top:547px;width:62px;text-align:right">0.8467</div><div class="t" style="left:505px;top:547px;width:62px;text-align:right">0.0000</div><div class="t" style="left:571px;top:547px;width:62px;text-align:right">0.8517</div><div class="t" style="left:637px;top:547px;width:143px;text-align:right">2010.12.07 03:04</div><div class="t" style="left:784px;top:547px;width:62px;text-align:right">0.8461</div><div class="t" style="left:850px;top:547px;width:62px;text-align:right">-0.94</div><div class="t" style="left:916px;top:547px;width:78px;text-align:right">-56.63</div><div class="a" style="left:21px;top:564px;width:978px;height:19px;background:#EEEBEE"></div><div class="hl" style="left:21px;top:583px;width:978px;background:#D2D0D2"></div><svg class="a" style="left:23px;top:565px" width="16" height="17"><path d="M1.5 1.5H9.5L12.5 4.5V14.5H1.5Z" fill="#fff" stroke="#404040"/><path d="M9.5 1.5V4.5H12.5Z" fill="#404040"/><circle cx="11.6" cy="12.4" r="3.4" fill="url(#gs)" stroke="#902008" stroke-width="0.7"/></svg><div class="t" style="left:45px;top:567px">6620018</div><div class="t" style="left:107px;top:567px;width:143px;text-align:right">2010.12.07 22:03</div><div class="t" style="left:254px;top:567px;width:62px;text-align:right">sell</div><div class="t" style="left:320px;top:567px;width:49px;text-align:right">1.10</div><div class="t" style="left:373px;top:567px;width:62px;text-align:right">gbpcad</div><div class="t" style="left:439px;top:567px;width:62px;text-align:right">1.5948</div><div class="t" style="left:505px;top:567px;width:62px;text-align:right">0.0000</div><div class="t" style="left:571px;top:567px;width:62px;text-align:right">1.5898</div><div class="t" style="left:637px;top:567px;width:143px;text-align:right">2010.12.07 22:40</div><div class="t" style="left:784px;top:567px;width:62px;text-align:right">1.5944</div><div class="t" style="left:850px;top:567px;width:62px;text-align:right">0.00</div><div class="t" style="left:916px;top:567px;width:78px;text-align:right">43.50</div><div class="a" style="left:21px;top:584px;width:978px;height:19px;background:#fff"></div><div class="hl" style="left:21px;top:603px;width:978px;background:#D2D0D2"></div><svg class="a" style="left:23px;top:585px" width="16" height="17"><path d="M1.5 1.5H9.5L12.5 4.5V14.5H1.5Z" fill="#fff" stroke="#404040"/><path d="M9.5 1.5V4.5H12.5Z" fill="#404040"/><circle cx="11.6" cy="12.4" r="3.4" fill="url(#gb)" stroke="#1a4a80" stroke-width="0.7"/></svg><div class="t" style="left:45px;top:587px">6620160</div><div class="t" style="left:107px;top:587px;width:143px;text-align:right">2010.12.07 22:07</div><div class="t" style="left:254px;top:587px;width:62px;text-align:right">buy</div><div class="t" style="left:320px;top:587px;width:49px;text-align:right">0.60</div><div class="t" style="left:373px;top:587px;width:62px;text-align:right">eurgbp</div><div class="t" style="left:439px;top:587px;width:62px;text-align:right">0.8417</div><div class="t" style="left:505px;top:587px;width:62px;text-align:right">0.0000</div><div class="t" style="left:571px;top:587px;width:62px;text-align:right">0.8467</div><div class="t" style="left:637px;top:587px;width:143px;text-align:right">2010.12.07 23:01</div><div class="t" style="left:784px;top:587px;width:62px;text-align:right">0.8417</div><div class="t" style="left:850px;top:587px;width:62px;text-align:right">0.00</div><div class="t" style="left:916px;top:587px;width:78px;text-align:right">0.00</div><div class="a" style="left:21px;top:604px;width:978px;height:19px;background:#EEEBEE"></div><div class="hl" style="left:21px;top:623px;width:978px;background:#D2D0D2"></div><svg class="a" style="left:23px;top:605px" width="16" height="17"><path d="M1.5 1.5H9.5L12.5 4.5V14.5H1.5Z" fill="#fff" stroke="#404040"/><path d="M9.5 1.5V4.5H12.5Z" fill="#404040"/><circle cx="11.6" cy="12.4" r="3.4" fill="url(#gs)" stroke="#902008" stroke-width="0.7"/></svg><div class="t" style="left:45px;top:607px">6630482</div><div class="t" style="left:107px;top:607px;width:143px;text-align:right">2010.12.08 22:42</div><div class="t" style="left:254px;top:607px;width:62px;text-align:right">sell</div><div class="t" style="left:320px;top:607px;width:49px;text-align:right">0.60</div><div class="t" style="left:373px;top:607px;width:62px;text-align:right">eurgbp</div><div class="t" style="left:439px;top:607px;width:62px;text-align:right">0.8393</div><div class="t" style="left:505px;top:607px;width:62px;text-align:right">0.0000</div><div class="t" style="left:571px;top:607px;width:62px;text-align:right">0.8343</div><div class="t" style="left:637px;top:607px;width:143px;text-align:right">2010.12.09 00:16</div><div class="t" style="left:784px;top:607px;width:62px;text-align:right">0.8390</div><div class="t" style="left:850px;top:607px;width:62px;text-align:right">-1.42</div><div class="t" style="left:916px;top:607px;width:78px;text-align:right">28.45</div><div class="a" style="left:21px;top:624px;width:978px;height:19px;background:#fff"></div><div class="hl" style="left:21px;top:643px;width:978px;background:#D2D0D2"></div><svg class="a" style="left:23px;top:625px" width="16" height="17"><path d="M1.5 1.5H9.5L12.5 4.5V14.5H1.5Z" fill="#fff" stroke="#404040"/><path d="M9.5 1.5V4.5H12.5Z" fill="#404040"/><circle cx="11.6" cy="12.4" r="3.4" fill="url(#gb)" stroke="#1a4a80" stroke-width="0.7"/></svg><div class="t" style="left:45px;top:627px">6639031</div><div class="t" style="left:107px;top:627px;width:143px;text-align:right">2010.12.09 23:01</div><div class="t" style="left:254px;top:627px;width:62px;text-align:right">buy</div><div class="t" style="left:320px;top:627px;width:49px;text-align:right">0.60</div><div class="t" style="left:373px;top:627px;width:62px;text-align:right">eurgbp</div><div class="t" style="left:439px;top:627px;width:62px;text-align:right">0.8396</div><div class="t" style="left:505px;top:627px;width:62px;text-align:right">0.0000</div><div class="t" style="left:571px;top:627px;width:62px;text-align:right">0.8446</div><div class="t" style="left:637px;top:627px;width:143px;text-align:right">2010.12.10 00:28</div><div class="t" style="left:784px;top:627px;width:62px;text-align:right">0.8396</div><div class="t" style="left:850px;top:627px;width:62px;text-align:right">-0.95</div><div class="t" style="left:916px;top:627px;width:78px;text-align:right">0.00</div><div class="a" style="left:21px;top:644px;width:978px;height:19px;background:#EEEBEE"></div><div class="hl" style="left:21px;top:663px;width:978px;background:#D2D0D2"></div><svg class="a" style="left:23px;top:645px" width="16" height="17"><path d="M1.5 1.5H9.5L12.5 4.5V14.5H1.5Z" fill="#fff" stroke="#404040"/><path d="M9.5 1.5V4.5H12.5Z" fill="#404040"/><circle cx="11.6" cy="12.4" r="3.4" fill="url(#gs)" stroke="#902008" stroke-width="0.7"/></svg><div class="t" style="left:45px;top:647px">6639049</div><div class="t" style="left:107px;top:647px;width:143px;text-align:right">2010.12.09 23:06</div><div class="t" style="left:254px;top:647px;width:62px;text-align:right">sell</div><div class="t" style="left:320px;top:647px;width:49px;text-align:right">1.10</div><div class="t" style="left:373px;top:647px;width:62px;text-align:right">gbpcad</div><div class="t" style="left:439px;top:647px;width:62px;text-align:right">1.5938</div><div class="t" style="left:505px;top:647px;width:62px;text-align:right">0.0000</div><div class="t" style="left:571px;top:647px;width:62px;text-align:right">1.5888</div><div class="t" style="left:637px;top:647px;width:143px;text-align:right">2010.12.10 00:54</div><div class="t" style="left:784px;top:647px;width:62px;text-align:right">1.5942</div><div class="t" style="left:850px;top:647px;width:62px;text-align:right">-1.09</div><div class="t" style="left:916px;top:647px;width:78px;text-align:right">-43.54</div><div class="vl" style="left:106px;top:143px;height:520px;background:#D0D0D4"></div><div class="vl" style="left:253px;top:143px;height:520px;background:#D0D0D4"></div><div class="vl" style="left:319px;top:143px;height:520px;background:#D0D0D4"></div><div class="vl" style="left:372px;top:143px;height:520px;background:#D0D0D4"></div><div class="vl" style="left:438px;top:143px;height:520px;background:#D0D0D4"></div><div class="vl" style="left:504px;top:143px;height:520px;background:#D0D0D4"></div><div class="vl" style="left:570px;top:143px;height:520px;background:#D0D0D4"></div><div class="vl" style="left:636px;top:143px;height:520px;background:#D0D0D4"></div><div class="vl" style="left:783px;top:143px;height:520px;background:#D0D0D4"></div><div class="vl" style="left:849px;top:143px;height:520px;background:#D0D0D4"></div><div class="vl" style="left:915px;top:143px;height:520px;background:#D0D0D4"></div><div class="vl" style="left:997px;top:143px;height:520px;background:#D0D0D4"></div><div class="a" style="left:21px;top:664px;width:978px;height:19px;background:#C9C8CC"></div><svg class="a" style="left:26px;top:668px" width="10" height="10"><circle cx="5" cy="5" r="3.5" fill="#c4c4c4" stroke="#7a7a7a" stroke-width="1.1"/><path d="M3.5 6.5L6.5 3.5" stroke="#9a9a9a" stroke-width="0.8"/></svg><div class="t" style="left:45px;top:667px;font-weight:bold;letter-spacing:0.4px">Profit/Loss: 4 653.85  Credit: 0.00  Deposit: 2 000.00  Withdrawal: 0.00</div><div class="t" style="left:800px;top:667px;width:195px;text-align:right;font-weight:bold;letter-spacing:0.4px">6 653.85</div><div class="a dith" style="left:999px;top:142px;width:16px;height:532px"></div><div class="btn" style="left:999px;top:126px;width:16px;height:16px"></div><svg class="a" style="left:999px;top:126px" width="16" height="16"><path d="M4 10 H11 L7.5 6.5 Z" fill="#000"/></svg><div class="btn" style="left:999px;top:654px;width:16px;height:20px"></div><div class="btn" style="left:999px;top:674px;width:16px;height:16px"></div><svg class="a" style="left:999px;top:674px" width="16" height="16"><path d="M4 6 H11 L7.5 9.5 Z" fill="#000"/></svg><div class="hl" style="left:20px;top:690px;width:996px;height:1px;background:#000"></div><div class="a" style="left:71px;top:690px;width:97px;height:18px;background:#fff;border-left:1px solid #000;border-right:1px solid #000;border-bottom:1px solid #000"></div><div class="t" style="left:33px;top:694px;color:#404040">Trade</div><div class="t" style="left:81px;top:693px">Account History</div><div class="t" style="left:176px;top:694px;color:#404040">News</div><div class="t" style="left:223px;top:694px;color:#404040">Alerts</div><div class="t" style="left:270px;top:694px;color:#404040">Mailbox</div><div class="t" style="left:326px;top:694px;color:#404040">Journal</div><div class="vl" style="left:213px;top:694px;height:12px;background:#404040"></div><div class="vl" style="left:261px;top:694px;height:12px;background:#404040"></div><div class="vl" style="left:317px;top:694px;height:12px;background:#404040"></div><div class="vl" style="left:372px;top:694px;height:12px;background:#404040"></div><div class="hl" style="left:20px;top:710px;width:997px;background:#fff"></div><div class="vl" style="left:1016px;top:125px;height:586px;background:#fff"></div><div class="vl" style="left:20px;top:690px;height:20px;background:#808080"></div><div class="hl" style="left:5px;top:713px;width:1014px;background:#808080"></div><div class="hl" style="left:5px;top:714px;width:1014px;background:#fff"></div><div class="t" style="left:6px;top:720px">For Help, press F1</div><div class="t" style="left:304px;top:720px">Default</div><div class="vl" style="left:298px;top:717px;height:18px;background:#808080"></div><div class="vl" style="left:299px;top:717px;height:18px;background:#fff"></div><div class="vl" style="left:408px;top:717px;height:18px;background:#808080"></div><div class="vl" style="left:409px;top:717px;height:18px;background:#fff"></div><div class="vl" style="left:508px;top:717px;height:18px;background:#808080"></div><div class="vl" style="left:509px;top:717px;height:18px;background:#fff"></div><div class="vl" style="left:581px;top:717px;height:18px;background:#808080"></div><div class="vl" style="left:582px;top:717px;height:18px;background:#fff"></div><div class="vl" style="left:651px;top:717px;height:18px;background:#808080"></div><div class="vl" style="left:652px;top:717px;height:18px;background:#fff"></div><div class="vl" style="left:721px;top:717px;height:18px;background:#808080"></div><div class="vl" style="left:722px;top:717px;height:18px;background:#fff"></div><div class="vl" style="left:791px;top:717px;height:18px;background:#808080"></div><div class="vl" style="left:792px;top:717px;height:18px;background:#fff"></div><div class="vl" style="left:858px;top:717px;height:18px;background:#808080"></div><div class="vl" style="left:859px;top:717px;height:18px;background:#fff"></div><div class="t" style="left:912px;top:720px">1519/2 kb</div><div class="hl" style="left:2px;top:737px;width:1020px;background:#404040"></div><div class="a" style="left:0;top:740px;width:1024px;height:28px;background:#D4D0C8;border-top:1px solid #fff"></div><div class="btn" style="left:2px;top:744px;width:52px;height:22px"></div><div class="a" style="left:62px;top:745px;width:2px;height:19px;border-left:1px solid #808080;border-right:1px solid #fff"></div><div class="a" style="left:144px;top:745px;width:2px;height:19px;border-left:1px solid #808080;border-right:1px solid #fff"></div><div class="btn" style="left:149px;top:744px;width:161px;height:22px"></div><div class="t" style="left:174px;top:749px">C:\Experts</div><div class="pressed" style="left:313px;top:744px;width:159px;height:22px;border-top-color:#404040;border-left-color:#404040"></div><div class="t" style="left:338px;top:750px;font-weight:bold;letter-spacing:0.6px">19530: MetaTrader - ...</div><div class="btn" style="left:476px;top:744px;width:160px;height:22px"></div><div class="t" style="left:500px;top:749px">untitled - Paint</div><div class="sunk" style="left:960px;top:744px;width:61px;height:22px"></div><div class="t" style="left:971px;top:749px">7:22 AM</div><svg class="a" style="left:7px;top:6px" width="16" height="16" viewBox="0 0 16 16"><rect x="0.5" y="0.5" width="15" height="15" rx="2" fill="#fdfaf4" stroke="#e8e4f0"/><rect x="6" y="4" width="1" height="1" fill="rgb(189,85,53)"/><rect x="5" y="5" width="1" height="1" fill="rgb(194,100,56)"/><rect x="7" y="5" width="1" height="1" fill="rgb(194,100,56)"/><rect x="9" y="5" width="1" height="1" fill="rgb(194,100,56)"/><rect x="4" y="6" width="1" height="1" fill="rgb(198,115,59)"/><rect x="6" y="6" width="1" height="1" fill="rgb(198,115,59)"/><rect x="8" y="6" width="1" height="1" fill="rgb(198,115,59)"/><rect x="10" y="6" width="1" height="1" fill="rgb(198,115,59)"/><rect x="12" y="6" width="1" height="1" fill="rgb(198,115,59)"/><rect x="3" y="7" width="1" height="1" fill="rgb(203,130,62)"/><rect x="5" y="7" width="1" height="1" fill="rgb(203,130,62)"/><rect x="7" y="7" width="1" height="1" fill="rgb(203,130,62)"/><rect x="9" y="7" width="1" height="1" fill="rgb(203,130,62)"/><rect x="11" y="7" width="1" height="1" fill="rgb(203,130,62)"/><rect x="13" y="7" width="1" height="1" fill="rgb(203,130,62)"/><rect x="2" y="8" width="1" height="1" fill="rgb(207,145,65)"/><rect x="4" y="8" width="1" height="1" fill="rgb(207,145,65)"/><rect x="6" y="8" width="1" height="1" fill="rgb(207,145,65)"/><rect x="8" y="8" width="1" height="1" fill="rgb(207,145,65)"/><rect x="10" y="8" width="1" height="1" fill="rgb(207,145,65)"/><rect x="12" y="8" width="1" height="1" fill="rgb(207,145,65)"/><rect x="14" y="8" width="1" height="1" fill="rgb(207,145,65)"/><rect x="3" y="9" width="1" height="1" fill="rgb(212,160,68)"/><rect x="5" y="9" width="1" height="1" fill="rgb(212,160,68)"/><rect x="7" y="9" width="1" height="1" fill="rgb(212,160,68)"/><rect x="9" y="9" width="1" height="1" fill="rgb(212,160,68)"/><rect x="11" y="9" width="1" height="1" fill="rgb(212,160,68)"/><rect x="13" y="9" width="1" height="1" fill="rgb(212,160,68)"/><rect x="2" y="10" width="1" height="1" fill="rgb(216,175,71)"/><rect x="4" y="10" width="1" height="1" fill="rgb(216,175,71)"/><rect x="8" y="10" width="1" height="1" fill="rgb(216,175,71)"/><rect x="10" y="10" width="1" height="1" fill="rgb(216,175,71)"/><rect x="12" y="10" width="1" height="1" fill="rgb(216,175,71)"/><rect x="14" y="10" width="1" height="1" fill="rgb(216,175,71)"/><rect x="3" y="11" width="1" height="1" fill="rgb(221,190,74)"/><rect x="5" y="11" width="1" height="1" fill="rgb(221,190,74)"/><rect x="11" y="11" width="1" height="1" fill="rgb(221,190,74)"/><rect x="13" y="11" width="1" height="1" fill="rgb(221,190,74)"/><rect x="4" y="12" width="1" height="1" fill="rgb(225,205,77)"/><rect x="12" y="12" width="1" height="1" fill="rgb(225,205,77)"/></svg>
<svg class="a" style="left:9px;top:25px" width="17" height="17" viewBox="0 0 17 17"><rect x="1.5" y="1.5" width="11" height="8" fill="#e4f6fc" stroke="#5a78a8"/><path d="M2 2.5H12" stroke="#3a5a98"/><path d="M3 5.5L5 4.5L7 5.5L9 4L11 5" stroke="#4a6aa8" fill="none"/><rect x="4.5" y="7.5" width="10" height="7" fill="#e4f8ff" stroke="#5a78a8"/><path d="M6 10L7.5 12.5L9 10L10.5 12.5L12.5 10.5" stroke="#3a5aa8" fill="none" stroke-width="0.9"/></svg>
<svg class="a" style="left:17px;top:49px" width="18" height="18" viewBox="0 0 18 18"><rect x="0.5" y="1.5" width="12" height="10" fill="#f4f8fc" stroke="#3a6ea8"/><rect x="1" y="2" width="11" height="2" fill="#9cc0e8"/><path d="M3.5 4.5V9.5M2.5 5.5L3.5 4.5L4.5 5.5M2.5 8.5L3.5 9.5L4.5 8.5" stroke="#7090b0" fill="none" stroke-width="0.8"/><path d="M9 4.5H13V8.5H16.5V12.5H13V16H9V12.5H5.5V8.5H9Z" fill="#3ad03a" stroke="#107010"/></svg>
<svg class="a" style="left:37px;top:57px" width="5" height="3" viewBox="0 0 5 3"><path d="M0 0H5L2.5 3Z" fill="#000"/></svg>
<svg class="a" style="left:52px;top:49px" width="18" height="18" viewBox="0 0 18 18"><rect x="0.5" y="1.5" width="13" height="10" fill="#f4f8fc" stroke="#3a6ea8"/><rect x="1" y="2" width="12" height="2" fill="#9cc0e8"/><path d="M3 5V9M3 7.5H11M10 6.5L11 7.5L10 8.5" stroke="#7090b0" fill="none" stroke-width="0.8"/><rect x="3.5" y="6.5" width="13" height="10" fill="#f4f8fc" stroke="#3a6ea8"/><path d="M5.5 13.5H14.5M6.5 12.5L5.5 13.5L6.5 14.5" stroke="#7090b0" fill="none" stroke-width="0.8"/></svg>
<svg class="a" style="left:72px;top:57px" width="5" height="3" viewBox="0 0 5 3"><path d="M0 0H5L2.5 3Z" fill="#000"/></svg>
<div class="vl" style="left:85px;top:48px;height:20px;background:#808080"></div><div class="vl" style="left:86px;top:48px;height:20px;background:#fff"></div>
<svg class="a" style="left:94px;top:49px" width="17" height="17" viewBox="0 0 17 17"><rect x="0.5" y="1.5" width="15" height="15" fill="#fff" stroke="#6a9ae0"/><path d="M5 3L8 6.5H6.5V9H3.5V6.5H2Z" fill="#20a020"/><path d="M10 14L13.5 10.5H12V8H9V10.5H6.5Z" fill="#e04020"/></svg>
<svg class="a" style="left:122px;top:50px" width="17" height="17" viewBox="0 0 17 17"><circle cx="8.5" cy="8.5" r="5.5" fill="none" stroke="#505050" stroke-width="1.2"/><path d="M8.5 0.5V16.5M0.5 8.5H16.5" stroke="#505050" stroke-width="1.2"/></svg>
<svg class="a" style="left:147px;top:49px" width="19" height="18" viewBox="0 0 19 18"><path d="M1.5 3.5H5.5L7 5H13.5V11.5H1.5Z" fill="#f8e880" stroke="#c8b040"/><path d="M1.5 6.5H13.5V11.5H1.5Z" fill="#fff0a0" stroke="#c8b040"/><path d="M6 12V17" stroke="#404060" stroke-dasharray="1 1"/><path d="M13 6L14.6 9.4L18.2 9.8L15.5 12.2L16.3 15.8L13 14L9.7 15.8L10.5 12.2L7.8 9.8L11.4 9.4Z" fill="#f8d830" stroke="#b08810" stroke-width="0.8"/></svg>
<div class="pressed" style="left:174px;top:46px;width:25px;height:23px"></div>
<svg class="a" style="left:178px;top:50px" width="17" height="16" viewBox="0 0 17 16"><rect x="0.5" y="0.5" width="15" height="13" fill="#fff" stroke="#3a6ea8"/><rect x="1" y="1" width="2.5" height="12" fill="#5a8ad0"/><rect x="5" y="3" width="1.5" height="1.5" fill="#333"/><rect x="5" y="6" width="1.5" height="1.5" fill="#333"/><rect x="5" y="9" width="1.5" height="1.5" fill="#333"/><path d="M8 3.5H14M8 6.5H14M8 9.5H14" stroke="#9ab8e0"/></svg>
<svg class="a" style="left:205px;top:49px" width="20" height="20" viewBox="0 0 20 20"><rect x="1.5" y="1.5" width="11" height="12" fill="#fff" stroke="#b0b0b0"/><path d="M3.5 3.5V9M3 6H10M9 4V8" stroke="#6070a0" stroke-width="0.9"/><circle cx="9" cy="10" r="4.8" fill="#c8dcf4" fill-opacity="0.85" stroke="#7a9ac0" stroke-width="1.2"/><path d="M12.5 13.5L17.5 18.5" stroke="#c8a020" stroke-width="2.4"/></svg>
<div class="vl" style="left:231px;top:48px;height:20px;background:#808080"></div><div class="vl" style="left:232px;top:48px;height:20px;background:#fff"></div>
<svg class="a" style="left:240px;top:50px" width="18" height="18" viewBox="0 0 18 18"><path d="M2.5 1.5H9L11.5 4V12.5H2.5Z" fill="#fff" stroke="#a0a0a0"/><path d="M4 5H8M4 7H9M4 9H8" stroke="#b0b0b0"/><path d="M9.5 9.5H12.5V6.5H14V9.5H17V11H14V14H12.5V11H9.5Z" fill="#a8a8a8" stroke="#a0a0a0"/><path d="M11.5 9.5V17M8 13H16" stroke="#a8a8a8" stroke-width="3"/></svg>
<div class="t" style="left:263px;top:53px;color:#fff">New Order</div><div class="t" style="left:262px;top:52px;color:#8c8c8c">New Order</div>
<svg class="a" style="left:323px;top:49px" width="18" height="18" viewBox="0 0 18 18"><path d="M8.5 1L16 8.5L8.5 16L1 8.5Z" fill="#f6d848" stroke="#b89418" stroke-width="1.3" stroke-linejoin="round"/><path d="M8.5 4.5V9.5" stroke="#604010" stroke-width="2"/><rect x="7.5" y="11" width="2" height="2" fill="#604010"/></svg>
<svg class="a" style="left:350px;top:49px" width="19" height="18" viewBox="0 0 19 18"><ellipse cx="8" cy="5" rx="7" ry="3.4" fill="#58a8e0" stroke="#3070b0" stroke-width="0.8"/><ellipse cx="8" cy="3.8" rx="3.5" ry="2.6" fill="#70c0f0"/><path d="M2 8H12L9 15Z" fill="#f0d040"/><path d="M2 8Q5 14 9 15" fill="none" stroke="#80c040" stroke-width="1"/><circle cx="13.5" cy="12.5" r="4.3" fill="#d02010" stroke="#a01000" stroke-width="0.6"/><rect x="11.5" y="10.5" width="4" height="4" fill="#fff"/></svg>
<div class="t" style="left:373px;top:52px">Expert Advisors</div>
<div class="pressed" style="left:465px;top:46px;width:26px;height:23px"></div>
<svg class="a" style="left:460px;top:46px" width="40" height="24" viewBox="0 0 40 24"><path d="M13.5 7V20M11 17.5H24" stroke="#505050" stroke-width="1"/><path d="M11.5 8.5L13.5 6.5L15.5 8.5M22.5 15.5L24.5 17.5L22.5 19.5" stroke="#505050" fill="none" stroke-width="1"/><path d="M19.5 7V15M19.5 8H22M17 15H19.5" stroke="#306030" stroke-width="1.2" fill="none"/></svg>
<svg class="a" style="left:495px;top:46px" width="24" height="24" viewBox="0 0 24 24"><path d="M6.5 7V20M4 17.5H17" stroke="#505050" stroke-width="1"/><path d="M4.5 8.5L6.5 6.5L8.5 8.5M15.5 15.5L17.5 17.5L15.5 19.5" stroke="#505050" fill="none" stroke-width="1"/><path d="M12.5 4V16" stroke="#206020"/><rect x="10.5" y="6.5" width="4" height="7" fill="#40e040" stroke="#108010"/></svg>
<svg class="a" style="left:523px;top:46px" width="24" height="24" viewBox="0 0 24 24"><path d="M6.5 7V20M4 17.5H17" stroke="#505050" stroke-width="1"/><path d="M4.5 8.5L6.5 6.5L8.5 8.5M15.5 15.5L17.5 17.5L15.5 19.5" stroke="#505050" fill="none" stroke-width="1"/><path d="M7 12Q10 4 17 11" fill="#b8e0b0" stroke="#509050"/></svg>
<div class="vl" style="left:550px;top:48px;height:20px;background:#808080"></div><div class="vl" style="left:551px;top:48px;height:20px;background:#fff"></div>
<svg class="a" style="left:558px;top:49px" width="17" height="17" viewBox="0 0 17 17"><circle cx="7" cy="7" r="5.5" fill="#d0ecfc" stroke="#2a5aa0" stroke-width="1.2"/><path d="M11 11L15.5 15.5" stroke="#d8b020" stroke-width="2.6"/><path d="M11 11L15.5 15.5" stroke="#a07810" stroke-width="0.6"/><path d="M4 7H10" stroke="#2a70b8" stroke-width="2"/><path d="M7 4V10" stroke="#2a70b8" stroke-width="2"/></svg>
<svg class="a" style="left:586px;top:49px" width="17" height="17" viewBox="0 0 17 17"><circle cx="7" cy="7" r="5.5" fill="#d0ecfc" stroke="#2a5aa0" stroke-width="1.2"/><path d="M11 11L15.5 15.5" stroke="#d8b020" stroke-width="2.6"/><path d="M11 11L15.5 15.5" stroke="#a07810" stroke-width="0.6"/><path d="M4 7H10" stroke="#2a70b8" stroke-width="2"/></svg>
<div class="vl" style="left:612px;top:48px;height:20px;background:#808080"></div><div class="vl" style="left:613px;top:48px;height:20px;background:#fff"></div>
<div class="pressed" style="left:617px;top:46px;width:26px;height:23px"></div>
<svg class="a" style="left:618px;top:46px" width="24" height="24" viewBox="0 0 24 24"><path d="M7.5 7V20M5 17.5H18" stroke="#505050" stroke-width="1"/><path d="M5.5 8.5L7.5 6.5L9.5 8.5M16.5 15.5L18.5 17.5L16.5 19.5" stroke="#505050" fill="none" stroke-width="1"/><path d="M12.5 8.5V14.5L16 11.5Z" fill="#a0e0a0" stroke="#209020"/></svg>
<svg class="a" style="left:647px;top:46px" width="24" height="24" viewBox="0 0 24 24"><path d="M6.5 7V20M4 17.5H17" stroke="#505050" stroke-width="1"/><path d="M4.5 8.5L6.5 6.5L8.5 8.5M15.5 15.5L17.5 17.5L15.5 19.5" stroke="#505050" fill="none" stroke-width="1"/><path d="M12.5 6V15" stroke="#404040" stroke-width="1.2"/><path d="M18 11.5H13.5M15.5 9.5L13.5 11.5L15.5 13.5" stroke="#c03020" fill="none"/></svg>
<div class="vl" style="left:675px;top:48px;height:20px;background:#808080"></div><div class="vl" style="left:676px;top:48px;height:20px;background:#fff"></div>
<svg class="a" style="left:683px;top:49px" width="19" height="19" viewBox="0 0 19 19"><path d="M1.5 1.5H8L10.5 4V13.5H1.5Z" fill="#fff" stroke="#505050"/><path d="M3 5H7" stroke="#505050"/><path d="M7.5 8.5H10.5V5.5H13.5V8.5H16.5V11.5H13.5V14.5H10.5V11.5H7.5Z" fill="#30d030" stroke="#108010"/></svg>
<svg class="a" style="left:702px;top:57px" width="5" height="3" viewBox="0 0 5 3"><path d="M0 0H5L2.5 3Z" fill="#000"/></svg>
<svg class="a" style="left:717px;top:49px" width="19" height="18" viewBox="0 0 19 18"><circle cx="9" cy="9" r="7.6" fill="#1a5ab8"/><circle cx="9" cy="9" r="6.4" fill="#3a8ae0"/><circle cx="9" cy="9" r="5" fill="#fafcff"/><path d="M9 5V9H12" stroke="#202020" fill="none" stroke-width="1"/></svg>
<svg class="a" style="left:737px;top:57px" width="5" height="3" viewBox="0 0 5 3"><path d="M0 0H5L2.5 3Z" fill="#000"/></svg>
<svg class="a" style="left:752px;top:50px" width="18" height="16" viewBox="0 0 18 16"><rect x="0.5" y="0.5" width="16" height="14" fill="#f8fbff" stroke="#3a6ea8"/><rect x="1" y="1" width="15" height="2" fill="#5a8ad0"/><path d="M1 8.5H16" stroke="#3a6ea8"/><path d="M3 6.5L6 5.5L9 6L13 4.5" stroke="#a03010" fill="none" stroke-width="0.9"/><path d="M3 12.5L6 11L9 12L13 10.5" stroke="#309030" fill="none" stroke-width="0.9"/></svg>
<svg class="a" style="left:772px;top:57px" width="5" height="3" viewBox="0 0 5 3"><path d="M0 0H5L2.5 3Z" fill="#000"/></svg>
<div class="pressed" style="left:14px;top:73px;width:26px;height:23px"></div>
<svg class="a" style="left:20px;top:76px" width="12" height="17" viewBox="0 0 12 17"><path d="M2.5 1.5L2.5 12.5L5 10L7.5 15.5L9.5 14.5L7 9.5H10.5Z" fill="#404040" stroke="#404040" stroke-width="0.8" stroke-linejoin="round"/></svg>
<svg class="a" style="left:45px;top:77px" width="18" height="17" viewBox="0 0 18 17"><path d="M1 8.5H8M10 8.5H17M9.5 0.5V7.5M9.5 9.5V16" stroke="#404040" stroke-width="1.2"/></svg>
<div class="vl" style="left:71px;top:74px;height:21px;background:#808080"></div><div class="vl" style="left:72px;top:74px;height:21px;background:#fff"></div>
<div class="a" style="left:88px;top:79px;width:1px;height:13px;background:#404040"></div>
<div class="a" style="left:110px;top:85px;width:13px;height:1px;background:#404040"></div>
<svg class="a" style="left:137px;top:79px" width="15" height="14" viewBox="0 0 15 14"><path d="M1.5 12.5L13.5 1" stroke="#404040" stroke-width="1.1"/></svg>
<svg class="a" style="left:164px;top:76px" width="18" height="18" viewBox="0 0 18 18"><path d="M1 12L13 3M3 16L15 7" stroke="#404040" stroke-width="1.1" fill="none"/><path d="M4.5 6V13M7.5 4V11M10.5 2V9M12.5 5V12" stroke="#404040" stroke-width="1" fill="none"/><text x="12" y="17" font-family="Liberation Sans" font-weight="bold" font-size="6.5" fill="#404040">E</text></svg>
<svg class="a" style="left:193px;top:77px" width="17" height="17" viewBox="0 0 17 17"><path d="M1 1.5H15M1 4.5H15M1 8.5H15M1 11.5H10" stroke="#404040" stroke-dasharray="1 1"/><text x="11" y="16" font-family="Liberation Sans" font-weight="bold" font-size="6.5" fill="#404040">F</text></svg>
<div class="t" style="left:224px;top:79px;color:#505050;font-size:12px">A</div>
<svg class="a" style="left:250px;top:78px" width="14" height="14" viewBox="0 0 14 14"><rect x="0.5" y="0.5" width="12" height="12" fill="none" stroke="#404040" stroke-dasharray="1 1"/><path d="M3.5 3.5H9.5M6.5 3.5V10.5" stroke="#404040" stroke-width="1.8"/></svg>
<svg class="a" style="left:277px;top:78px" width="16" height="15" viewBox="0 0 16 15"><path d="M4 0.5L7.5 3.5L4 6.5L0.5 3.5Z" fill="#404040"/><path d="M3 7.5L5 9.5L9.5 5" stroke="#404040" fill="none" stroke-width="1.3"/><path d="M11.5 8L15 11L11.5 14L8 11Z" fill="#404040"/></svg>
<svg class="a" style="left:295px;top:84px" width="5" height="3" viewBox="0 0 5 3"><path d="M0 0H5L2.5 3Z" fill="#000"/></svg>
<div class="t" style="left:321px;top:80px;color:#404040;font-size:10px">M1</div>
<div class="t" style="left:349px;top:80px;color:#404040;font-size:10px">M5</div>
<div class="t" style="left:375px;top:80px;color:#404040;font-size:10px">M15</div>
<div class="t" style="left:403px;top:80px;color:#404040;font-size:10px">M30</div>
<div class="t" style="left:461px;top:80px;color:#404040;font-size:10px">H4</div>
<div class="t" style="left:490px;top:80px;color:#404040;font-size:10px">D1</div>
<div class="t" style="left:518px;top:80px;color:#404040;font-size:10px">W1</div>
<div class="t" style="left:545px;top:80px;color:#404040;font-size:10px">MN</div>
<div class="pressed" style="left:428px;top:73px;width:26px;height:23px"></div>
<div class="t" style="left:434px;top:80px;color:#404040;font-size:10px">H1</div>
<svg class="a" style="left:990px;top:106px" width="8" height="9" viewBox="0 0 8 9"><path d="M5 1V8L1.5 4.5Z" fill="#a0a0a0"/></svg>
<svg class="a" style="left:1007px;top:106px" width="8" height="9" viewBox="0 0 8 9"><path d="M2 1V8L5.5 4.5Z" fill="#a0a0a0"/></svg>
<svg class="a" style="left:863px;top:720px" width="24" height="12" viewBox="0 0 24 12"><rect x="0" y="0" width="2" height="9" fill="#2e6a12"/><rect x="0" y="10" width="2" height="2" fill="#a00808"/><rect x="3" y="0" width="2" height="8" fill="#2e6a12"/><rect x="3" y="9" width="2" height="3" fill="#a00808"/><rect x="6" y="0" width="2" height="7" fill="#2e6a12"/><rect x="6" y="8" width="2" height="4" fill="#a00808"/><rect x="9" y="0" width="2" height="6" fill="#2e6a12"/><rect x="9" y="7" width="2" height="5" fill="#a00808"/><rect x="12" y="0" width="2" height="5" fill="#2e6a12"/><rect x="12" y="6" width="2" height="6" fill="#a00808"/><rect x="15" y="0" width="2" height="4" fill="#2e6a12"/><rect x="15" y="5" width="2" height="7" fill="#a00808"/><rect x="18" y="0" width="2" height="3" fill="#2e6a12"/><rect x="18" y="4" width="2" height="8" fill="#a00808"/><rect x="21" y="0" width="2" height="2" fill="#2e6a12"/><rect x="21" y="3" width="2" height="9" fill="#a00808"/></svg>
<svg class="a" style="left:1003px;top:720px" width="16" height="16" viewBox="0 0 16 16"><path d="M15 1L1 15M15 5L5 15M15 9L9 15" stroke="#fff" stroke-width="1"/><path d="M15 2L2 15M15 3L3 15M15 6L6 15M15 7L7 15M15 10L10 15M15 11L11 15" stroke="#808080" stroke-width="1"/></svg>
<svg class="a" style="left:3px;top:745px" width="18" height="18" viewBox="0 0 18 18"><path d="M3 2Q6 0 9.5 2L8.5 8Q5.5 6.5 2 8Z" fill="#f06a28"/><path d="M10 2.5Q13 4 16.5 3L15.5 9.5Q12.5 10 9 8.5Z" fill="#5cc02c"/><path d="M2 8.8Q5.5 7.2 8.4 8.8L7.5 14.5Q4.5 13 1 14.5Z" fill="#3a66e0"/><path d="M9 9.3Q12.5 10.8 15.4 10.2L14.5 16Q11.5 16.5 8 15Z" fill="#f2cc20"/></svg>
<div class="t" style="left:22px;top:749px;font-weight:bold;font-size:11px;letter-spacing:0.8px">Start</div>
<svg class="a" style="left:70px;top:747px" width="17" height="16" viewBox="0 0 17 16"><rect x="1.5" y="1.5" width="13" height="13" rx="3" fill="#fff" stroke="#2a6ac0" stroke-width="2"/><path d="M11 4.5Q5 3 4.5 8Q5 13 11 11.5" fill="none" stroke="#3a8ae0" stroke-width="2"/><path d="M6 8.5H10M8.5 6.5L11 4" stroke="#202020" stroke-width="1.2"/><rect x="0" y="13" width="4" height="3" fill="#304050"/><circle cx="15.5" cy="6" r="1.2" fill="#d07030"/></svg>
<svg class="a" style="left:93px;top:747px" width="17" height="17" viewBox="0 0 17 17"><circle cx="9" cy="8.5" r="5.3" fill="#fff" stroke="#2a80d8" stroke-width="3"/><path d="M5 8.5H13.5" stroke="#2a80d8" stroke-width="2"/><rect x="10" y="9.6" width="6" height="2.4" fill="#fff"/><path d="M2 15Q1 11 6 6M12 3Q16 1 15 4" fill="none" stroke="#60b0f0" stroke-width="1.4"/></svg>
<svg class="a" style="left:117px;top:747px" width="16" height="16" viewBox="0 0 16 16"><ellipse cx="8" cy="8" rx="7.2" ry="7.6" fill="#e01010"/><ellipse cx="8" cy="8" rx="2.6" ry="5.2" fill="#f8e8e8"/><ellipse cx="8" cy="8" rx="7.2" ry="7.6" fill="none" stroke="#a00000" stroke-width="0.8"/></svg>
<svg class="a" style="left:153px;top:747px" width="17" height="15" viewBox="0 0 17 15"><path d="M2 3.5Q2 2 3.5 2H7L8.5 3.5H13.5Q15 3.5 15 5V12Q15 13.5 13.5 13.5H3.5Q2 13.5 2 12Z" fill="#f4e46a" stroke="#9a8418" stroke-width="1.1"/><path d="M4.5 6.5H14.5Q15 6.5 15 7.5V12Q15 13.5 13.5 13.5H3.5Q2.5 13.5 3 12.5Z" fill="#fbf08a" stroke="#9a8418" stroke-width="1.1"/></svg>
<svg class="a" style="left:318px;top:747px" width="15" height="16" viewBox="0 0 15 16"><rect x="0" y="0" width="15" height="16" rx="2" fill="#fdfaf4"/><rect x="6" y="4" width="1" height="1" fill="rgb(189,85,53)"/><rect x="5" y="5" width="1" height="1" fill="rgb(194,100,56)"/><rect x="7" y="5" width="1" height="1" fill="rgb(194,100,56)"/><rect x="9" y="5" width="1" height="1" fill="rgb(194,100,56)"/><rect x="4" y="6" width="1" height="1" fill="rgb(198,115,59)"/><rect x="6" y="6" width="1" height="1" fill="rgb(198,115,59)"/><rect x="8" y="6" width="1" height="1" fill="rgb(198,115,59)"/><rect x="10" y="6" width="1" height="1" fill="rgb(198,115,59)"/><rect x="12" y="6" width="1" height="1" fill="rgb(198,115,59)"/><rect x="3" y="7" width="1" height="1" fill="rgb(203,130,62)"/><rect x="5" y="7" width="1" height="1" fill="rgb(203,130,62)"/><rect x="7" y="7" width="1" height="1" fill="rgb(203,130,62)"/><rect x="9" y="7" width="1" height="1" fill="rgb(203,130,62)"/><rect x="11" y="7" width="1" height="1" fill="rgb(203,130,62)"/><rect x="13" y="7" width="1" height="1" fill="rgb(203,130,62)"/><rect x="2" y="8" width="1" height="1" fill="rgb(207,145,65)"/><rect x="4" y="8" width="1" height="1" fill="rgb(207,145,65)"/><rect x="6" y="8" width="1" height="1" fill="rgb(207,145,65)"/><rect x="8" y="8" width="1" height="1" fill="rgb(207,145,65)"/><rect x="10" y="8" width="1" height="1" fill="rgb(207,145,65)"/><rect x="12" y="8" width="1" height="1" fill="rgb(207,145,65)"/><rect x="14" y="8" width="1" height="1" fill="rgb(207,145,65)"/><rect x="3" y="9" width="1" height="1" fill="rgb(212,160,68)"/><rect x="5" y="9" width="1" height="1" fill="rgb(212,160,68)"/><rect x="7" y="9" width="1" height="1" fill="rgb(212,160,68)"/><rect x="9" y="9" width="1" height="1" fill="rgb(212,160,68)"/><rect x="11" y="9" width="1" height="1" fill="rgb(212,160,68)"/><rect x="13" y="9" width="1" height="1" fill="rgb(212,160,68)"/><rect x="2" y="10" width="1" height="1" fill="rgb(216,175,71)"/><rect x="4" y="10" width="1" height="1" fill="rgb(216,175,71)"/><rect x="8" y="10" width="1" height="1" fill="rgb(216,175,71)"/><rect x="10" y="10" width="1" height="1" fill="rgb(216,175,71)"/><rect x="12" y="10" width="1" height="1" fill="rgb(216,175,71)"/><rect x="14" y="10" width="1" height="1" fill="rgb(216,175,71)"/><rect x="3" y="11" width="1" height="1" fill="rgb(221,190,74)"/><rect x="5" y="11" width="1" height="1" fill="rgb(221,190,74)"/><rect x="11" y="11" width="1" height="1" fill="rgb(221,190,74)"/><rect x="13" y="11" width="1" height="1" fill="rgb(221,190,74)"/><rect x="4" y="12" width="1" height="1" fill="rgb(225,205,77)"/><rect x="12" y="12" width="1" height="1" fill="rgb(225,205,77)"/></svg>
<svg class="a" style="left:480px;top:746px" width="15" height="18" viewBox="0 0 15 18"><path d="M3.5 2L5 10" stroke="#705030" stroke-width="2.4"/><path d="M5 8L5.5 12" stroke="#5a70c0" stroke-width="2.4"/><path d="M7.5 5V12" stroke="#e0c020" stroke-width="2.2"/><path d="M10.5 3L9.5 11" stroke="#404040" stroke-width="2"/><path d="M10 7L9.5 11" stroke="#d03020" stroke-width="2.4"/><path d="M5 11V15M7.5 11V16M10 11V15" stroke="#40a080" stroke-width="2.2"/><path d="M7.5 11V16" stroke="#e07040" stroke-width="2"/></svg>
</body></html>
